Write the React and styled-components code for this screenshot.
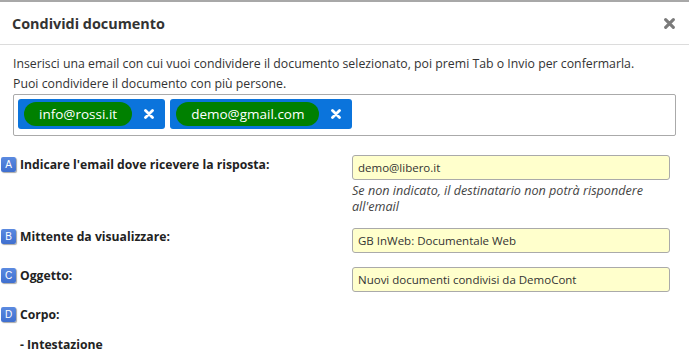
import React from 'react';
import styled, { createGlobalStyle } from 'styled-components';

const GlobalStyle = createGlobalStyle`
  html, body {
    margin: 0;
    padding: 0;
    background: #fff;
  }
  body {
    font-family: "Open Sans", "Noto Sans", sans-serif;
    color: #333;
  }
`;

const Dialog = styled.div`
  width: 689px;
  height: 363px;
  overflow: hidden;
  border-top: 2px solid #a8a8a8;
  box-sizing: border-box;
  background: #fff;
`;

const Header = styled.div`
  height: 42px;
  display: flex;
  align-items: center;
  justify-content: space-between;
  padding: 0 14px 0 12px;
  border-bottom: 1px solid #dcdcdc;
  h2 {
    margin: 0;
    font-size: 14.4px;
    font-weight: 700;
    color: #333;
  }
`;

const Close = styled.span`
  color: #7a7a7a;
  display: flex;
`;

const Body = styled.div`
  padding: 9px 13px 0 13px;
`;

const Intro = styled.p`
  margin: 0;
  font-size: 12.3px;
  line-height: 20px;
  color: #333;
`;

const TagBox = styled.div`
  height: 42px;
  box-sizing: border-box;
  border: 1px solid #aaa;
  border-radius: 2px;
  padding: 4px;
  display: flex;
  align-items: flex-start;
  gap: 5px;
`;

const Chip = styled.div`
  height: 30px;
  box-sizing: border-box;
  background: #0b74dc;
  border-radius: 3px;
  padding: 3px 0 3px 6px;
  display: flex;
  align-items: center;
`;

const Pill = styled.span`
  height: 24px;
  box-sizing: border-box;
  padding: 0 15px;
  border-radius: 12px;
  background: #008000;
  color: #fff;
  font-size: 13.5px;
  display: flex;
  align-items: center;
`;

const Remove = styled.span`
  width: 33px;
  display: flex;
  justify-content: center;
  color: #fff;
`;

const Form = styled.div`
  margin-top: 19px;
  padding-left: 1px;
`;

const Row = styled.div`
  display: grid;
  grid-template-columns: 351px 318px;
  align-items: start;
  margin-bottom: ${p => p.$gap}px;
`;

const LabelCell = styled.div`
  display: flex;
  align-items: center;
  gap: 4px;
  padding-top: ${p => p.$top}px;
`;

const Badge = styled.span`
  width: 15px;
  height: 15px;
  border-radius: 2px;
  background: linear-gradient(#5b8ae0, #3f6fcf);
  box-shadow: 1px 1px 1px rgba(0, 0, 0, 0.35);
  color: #fff;
  font-family: "Liberation Sans", sans-serif;
  font-size: 10px;
  line-height: 15px;
  text-align: center;
  flex: none;
`;

const Label = styled.span`
  font-size: 12.2px;
  font-weight: 700;
  color: #222;
`;

const Field = styled.div`
  height: 25px;
  box-sizing: border-box;
  border: 1px solid #aaa;
  border-radius: 3px;
  background: #ffffcc;
  padding: 0 5px;
  display: flex;
  align-items: center;
  font-size: 11.5px;
  color: #333;
`;

const Help = styled.div`
  font-size: 12.6px;
  font-style: italic;
  line-height: 16px;
  color: #444;
  padding-top: 3px;
`;

const SubLabel = styled.div`
  padding-left: 19px;
  font-size: 12.2px;
  font-weight: 700;
  color: #222;
`;

const XIcon = ({ size = 10, stroke = 3 }) => (
  <svg width={size} height={size} viewBox="0 0 10 10">
    <path d="M1.5 1.5 L8.5 8.5 M8.5 1.5 L1.5 8.5" stroke="currentColor" strokeWidth={stroke} strokeLinecap="round" />
  </svg>
);

const emails = ['info@rossi.it', 'demo@gmail.com'];

const App = () => (
  <>
    <GlobalStyle />
    <Dialog>
      <Header>
        <h2>Condividi documento</h2>
        <Close><XIcon size={11} stroke={2.8} /></Close>
      </Header>
      <Body>
        <Intro>
          Inserisci una email con cui vuoi condividere il documento selezionato, poi premi Tab o Invio per confermarla.
          <br />
          Puoi condividere il documento con più persone.
        </Intro>
        <TagBox>
          {emails.map(e => (
            <Chip key={e}>
              <Pill>{e}</Pill>
              <Remove><XIcon size={10} stroke={2.8} /></Remove>
            </Chip>
          ))}
        </TagBox>
      </Body>
      <Form>
        <Row $gap={13}>
          <LabelCell $top={1}>
            <Badge>A</Badge>
            <Label>Indicare l'email dove ricevere la risposta:</Label>
          </LabelCell>
          <div>
            <Field>demo@libero.it</Field>
            <Help>Se non indicato, il destinatario non potrà rispondere all'email</Help>
          </div>
        </Row>
        <Row $gap={14}>
          <LabelCell $top={0}>
            <Badge>B</Badge>
            <Label>Mittente da visualizzare:</Label>
          </LabelCell>
          <Field>GB InWeb: Documentale Web</Field>
        </Row>
        <Row $gap={14}>
          <LabelCell $top={0}>
            <Badge>C</Badge>
            <Label>Oggetto:</Label>
          </LabelCell>
          <Field>Nuovi documenti condivisi da DemoCont</Field>
        </Row>
        <Row $gap={13}>
          <LabelCell $top={0}>
            <Badge>D</Badge>
            <Label>Corpo:</Label>
          </LabelCell>
        </Row>
        <SubLabel>- Intestazione</SubLabel>
      </Form>
    </Dialog>
  </>
);

export default App;
